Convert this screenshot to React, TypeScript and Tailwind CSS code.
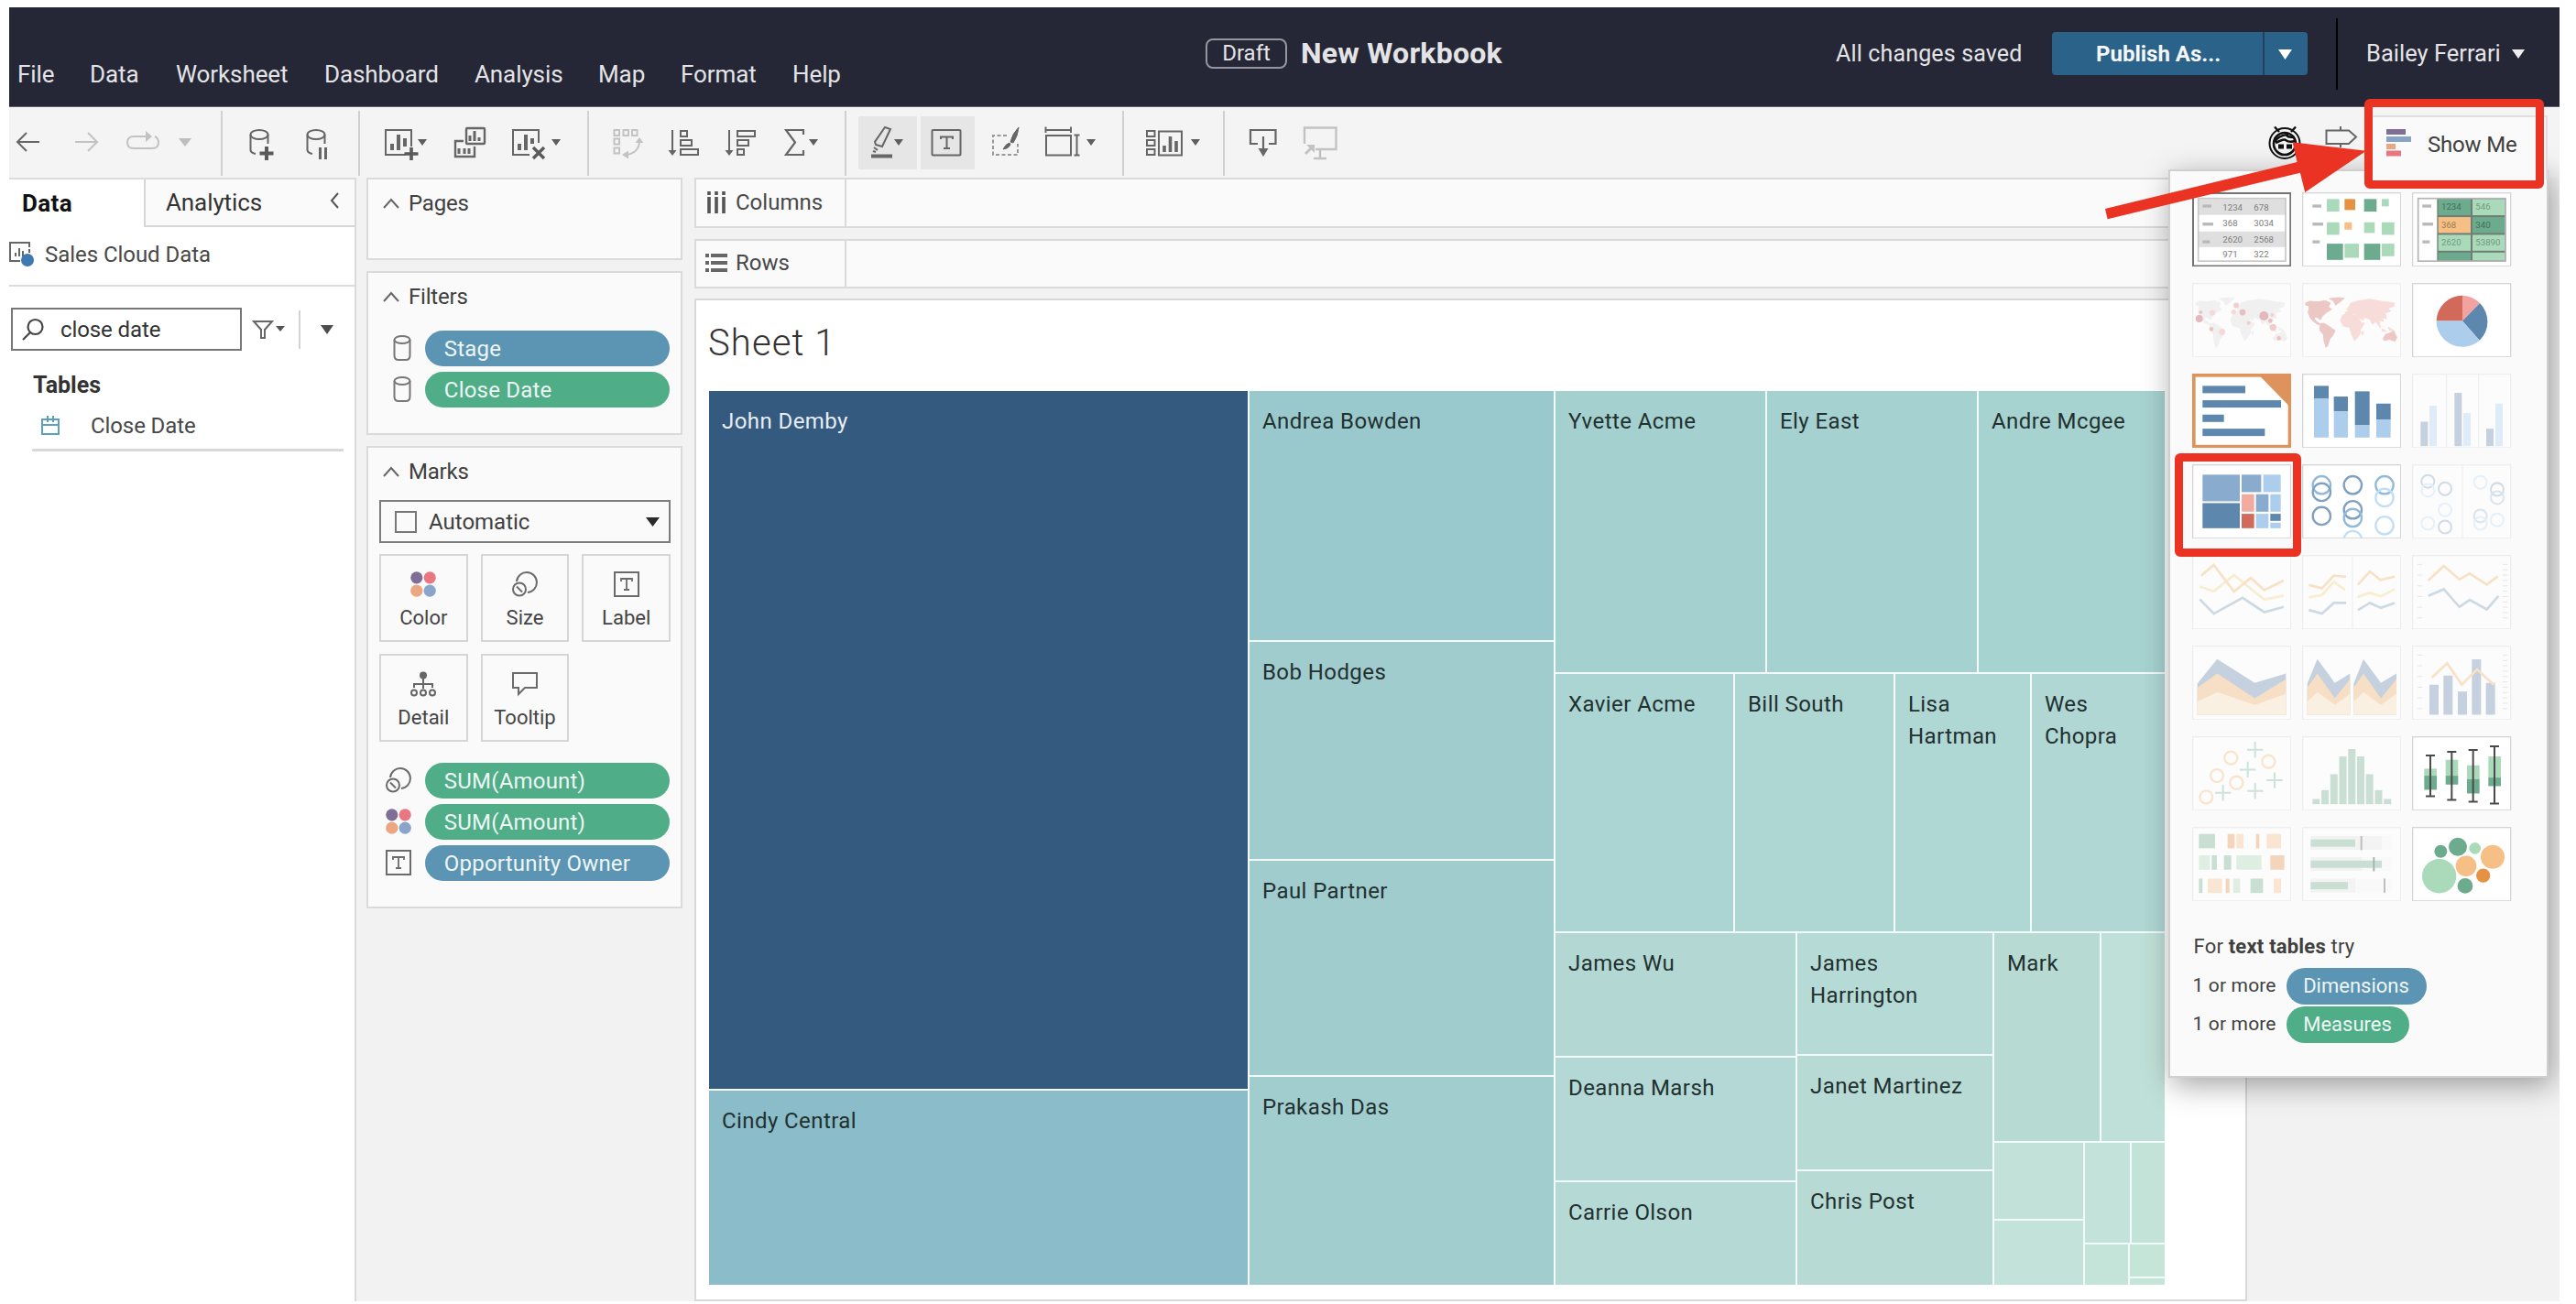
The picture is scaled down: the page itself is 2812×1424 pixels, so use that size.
import React from "react";

type Kids = { children?: React.ReactNode };

/* ---------- toolbar ---------- */

const DARK = "#666666";
const LIGHT = "#c2c2c2";

function Caret({ x, y = 152, w = 10, h = 7, fill = "#5e5e5e" }: { x: number; y?: number; w?: number; h?: number; fill?: string }) {
  return <polygon points={`${x},${y} ${x + w},${y} ${x + w / 2},${y + h}`} fill={fill} stroke="none" />;
}

// A tool's art is drawn in window coordinates; the button spans [from, to].
function Tool({ from, to, color = DARK, children }: Kids & { from: number; to: number; color?: string }) {
  return (
    <svg className="block shrink-0" width={to - from} height={77} viewBox={`${from} 117 ${to - from} 77`} fill="none" stroke={color} strokeWidth={2}>
      {children}
    </svg>
  );
}

function Separator() {
  return <div className="mt-1 h-[71px] w-0.5 shrink-0 bg-[#d0d0d0]" />;
}

function Toolbar() {
  return (
    <div className="flex h-[77px] shrink-0 bg-[#f4f4f4]">
      <Tool from={10} to={60}><path d="M43 155H19M29 145L19 155L29 165" /></Tool>
      <Tool from={60} to={120} color={LIGHT}><path d="M82 155H106M96 145L106 155L96 165" /></Tool>
      <Tool from={120} to={241} color={LIGHT}>
        <path d="M148 149H146Q139 149 139 155.500Q139 162 146 162H166Q173 162 173 155.500Q173 151 169 149M148 149H162" />
        <polygon points="159,143 166,149 159,155" fill={LIGHT} stroke="none" />
        <Caret x={195} y={151} w={14} h={9} fill="#bdbdbd" />
      </Tool>
      <Separator />
      <Tool from={243} to={315}>
        <ellipse cx={283} cy={147} rx={9.500} ry={5} />
        <path d="M273.500 147V164Q274 167 279 168M292.500 147V157" />
        <path d="M291 160V175M283.500 167.500H298.500" strokeWidth={4} stroke="#5a5a5a" />
      </Tool>
      <Tool from={315} to={391}>
        <ellipse cx={345} cy={147} rx={9.500} ry={5} />
        <path d="M335.500 147V164Q336 167 341 168M354.500 147V157" />
        <path d="M349.500 161V174M355.500 161V174" strokeWidth={3} />
      </Tool>
      <Separator />
      <Tool from={393} to={480}>
        <path d="M440 169H421V142H449V160M443 169H440" />
        <path d="M428 164V157M435 164V147M442 160V151" strokeWidth={4} />
        <path d="M449 161V175M441.500 168H456.500" strokeWidth={3.600} stroke="#5a5a5a" />
        <Caret x={456} />
      </Tool>
      <Tool from={480} to={545}>
        <rect x={509} y={140} width={20} height={17} rx={1} strokeWidth={2.400} />
        <path d="M513 154V148M518 154V143M523 154V150" strokeWidth={3} />
        <path d="M506 154H497V171H518V160" strokeWidth={2.400} />
        <path d="M501 168V162M507 168V162M512 168V162" strokeWidth={3} />
      </Tool>
      <Tool from={545} to={641}>
        <path d="M578 169H560V142H588V156" />
        <path d="M567 164V157M574 164V147M581 157V151" strokeWidth={4} />
        <path d="M582 161L594 173M594 161L582 173" strokeWidth={3.400} stroke="#5a5a5a" />
        <Caret x={602} />
      </Tool>
      <Separator />
      <Tool from={643} to={715} color={LIGHT}>
        <rect x={670.500} y={142} width={5.500} height={6} /><rect x={680.500} y={142} width={5.500} height={6} /><rect x={690} y={142} width={5.500} height={6} />
        <rect x={670.500} y={151.500} width={5.500} height={6} /><rect x={670.500} y={161.500} width={5.500} height={6} />
        <path d="M698 155Q697 167 684 169" />
        <polygon points="698,150 702.500,156 693.500,156" fill={LIGHT} stroke="none" />
        <polygon points="679,169 686,164.500 686,173.500" fill={LIGHT} stroke="none" />
      </Tool>
      <Tool from={715} to={778}>
        <path d="M734 142V166" /><polygon points="729.500,164 738.500,164 734,170" fill={DARK} stroke="none" />
        <rect x={743} y={143} width={7} height={6} /><rect x={743} y={153} width={12} height={6} /><rect x={743} y={163} width={19} height={6} />
      </Tool>
      <Tool from={778} to={842}>
        <path d="M796 142V166" /><polygon points="791.500,164 800.500,164 796,170" fill={DARK} stroke="none" />
        <rect x={805} y={143} width={19} height={6} /><rect x={805} y={153} width={12} height={6} /><rect x={805} y={163} width={7} height={6} />
      </Tool>
      <Tool from={842} to={922}>
        <path d="M877 147V142H858L868 155.500L858 169H877V164" strokeWidth={2.200} />
        <Caret x={883} />
      </Tool>
      <Separator />
      <div className="mt-[10px] ml-[13px] h-[58px] w-16 shrink-0 bg-[#e6e6e6]">
        <svg className="block" width={64} height={58} viewBox="937 127 64 58" fill="none" stroke={DARK} strokeWidth={2}>
          <path d="M966 139L972 141L963 160L956 158L955 155Z" />
          <path d="M954 161l4 3M953 165l3 1" />
          <path d="M951 170.500H974" strokeWidth={4} />
          <Caret x={976} />
        </svg>
      </div>
      <div className="mt-[10px] ml-1 h-[58px] w-[59px] shrink-0 bg-[#e6e6e6]">
        <svg className="block" width={59} height={58} viewBox="1005 127 59 58" fill="none" stroke={DARK} strokeWidth={2}>
          <rect x={1017.500} y={142} width={31} height={27.500} rx={1} />
          <path d="M1027 152V149.500H1040V152M1033.500 149.500V162M1030 162H1037" />
        </svg>
      </div>
      <Tool from={1064} to={1127}>
        <path d="M1099 148H1084V169H1111V157" strokeDasharray="4 2.500" stroke="#999" />
        <path d="M1112 139Q1105 146 1103 155L1106 156Q1111 149 1112 139Z" fill={DARK} strokeWidth={1} />
        <path d="M1102 156Q1098 157 1095 163Q1101 162.500 1103 158Z" fill={DARK} strokeWidth={1} />
      </Tool>
      <Tool from={1127} to={1225}>
        <rect x={1142} y={148} width={27} height={21.500} />
        <path d="M1141.500 138.500V145M1169 138.500V145M1141.500 142H1169M1175.500 148V169.500M1172.500 147.500H1178.500M1172.500 169.500H1178.500" />
        <Caret x={1186} />
      </Tool>
      <Separator />
      <Tool from={1227} to={1335}>
        <rect x={1252} y={143} width={8.500} height={6} /><rect x={1252} y={153} width={8.500} height={6} /><rect x={1252} y={163} width={8.500} height={6} />
        <rect x={1265} y={143.500} width={25} height={26} />
        <path d="M1271 166V159M1277.500 166V149M1284 166V154" strokeWidth={3.600} />
        <Caret x={1300} />
      </Tool>
      <Separator />
      <Tool from={1337} to={1408}>
        <path d="M1373 157H1365V142H1392.500V157H1385M1379 149V165" strokeWidth={2.200} />
        <polygon points="1373.500,162 1384.500,162 1379,171" fill={DARK} stroke="none" />
      </Tool>
      <Tool from={1408} to={1475} color={LIGHT}>
        <path d="M1424 157V139.500H1458.500V163H1436M1441 163V173M1434 173H1448" strokeWidth={2.400} />
        <path d="M1425 168L1433 160" strokeWidth={3} /><polygon points="1426,158 1435,158 1435,167" fill={LIGHT} stroke="none" />
      </Tool>
      <div className="grow" />
      <Tool from={2460} to={2525} color="#111111">
        <path d="M2488 144L2483 138.500M2501 144L2506 138.500" strokeWidth={2.400} />
        <circle cx={2494} cy={156.500} r={16.500} strokeWidth={2} /><circle cx={2494} cy={157} r={12} strokeWidth={2.600} />
        <path d="M2483 155Q2487 148 2497 147Q2495 150 2505 150M2484 156Q2494 151 2495 153Q2499 156 2505 154" strokeWidth={2.600} />
        <path d="M2487 157.500h6v5h-6zM2496 157.500h6v5h-6z" fill="#111" stroke="none" />
      </Tool>
      <Tool from={2525} to={2794}>
        <path d="M2539.500 142.500H2564L2572 149.500L2564 157H2539.500ZM2555 138V142M2555 157V161" />
      </Tool>
    </div>
  );
}

/* ---------- header ---------- */

const menu: [string, string][] = [
  ["File", "w-[79px]"], ["Data", "w-[94px]"], ["Worksheet", "w-[162px]"], ["Dashboard", "w-[164px]"],
  ["Analysis", "w-[135px]"], ["Map", "w-[90px]"], ["Format", "w-[122px]"], ["Help", "w-[60px]"],
];

function Header() {
  return (
    <header className="flex h-[109px] shrink-0 border-b border-[#5c5f6e] bg-[#252736] text-[#e4e4e6]">
      <nav className="flex w-[1306px] shrink-0 pt-[57px] pl-[9px] text-[26px] leading-8 tracking-[-0.1px]">
        {menu.map(([label, w]) => <span key={label} className={`${w} shrink-0`}>{label}</span>)}
      </nav>
      <div className="flex h-[100px] w-[688px] shrink-0 items-center">
        <span className="flex h-[33px] w-[89px] items-center justify-center rounded-lg border-2 border-[#96979e] text-2xl">Draft</span>
        <span className="ml-[15px] text-[32px] font-bold tracking-[0.25px]">New Workbook</span>
      </div>
      <div className="flex h-[101px] items-center whitespace-nowrap">
        <span className="w-[236px] text-[25px] tracking-[0.15px]">All changes saved</span>
        <div className="flex h-[47px] w-[279px] overflow-hidden rounded bg-[#2b6289] text-2xl font-bold text-[#f4f6f8]">
          <span className="flex w-[232px] items-center border-r-2 border-[#21425e] pl-12">Publish As...</span>
          <svg className="h-full w-[45px]" viewBox="0 0 45 47"><polygon points="15,19 30,19 22.5,30" fill="#fff" /></svg>
        </div>
        <div className="ml-[31px] h-[78px] w-0.5 bg-black" />
        <span className="ml-[31px] text-[25.500px]">Bailey Ferrari</span>
        <svg className="ml-[12px]" width={14} height={10} viewBox="0 0 14 10"><polygon points="0,0 14,0 7,10" fill="#eee" /></svg>
      </div>
    </header>
  );
}

/* ---------- data pane ---------- */

function DataPane() {
  return (
    <aside className="flex w-[379px] shrink-0 flex-col border-t-2 border-r-2 border-t-[#dcdcdc] border-r-[#dadada] bg-white text-2xl text-[#484848]">
      <div className="flex h-[52px] text-[26px]">
        <div className="flex w-[147px] items-center pl-[14px] font-bold tracking-[0.4px] text-[#111]">Data</div>
        <div className="flex grow items-center justify-between border-b-2 border-l-2 border-[#d6d6d6] bg-[#fafafa] pl-[22px] text-[#333] tracking-[-0.1px]">
          Analytics
          <svg className="mr-4 mb-1" width={11} height={18} viewBox="0 0 11 18" fill="none" stroke="#555" strokeWidth={2}><path d="M9 1L2 9L9 17" /></svg>
        </div>
      </div>
      <div className="flex h-[65px] items-center border-b-2 border-[#dcdcdc] pb-1">
        <svg width={30} height={30} viewBox="0 0 30 30" fill="none" stroke="#666" strokeWidth={2}>
          <path d="M12 22H1V2H22V7M22 9V13M7 17V13M11 17V8M15 17V11" />
          <circle cx={20} cy={21} r={7} fill="#3f79b2" stroke="none" />
        </svg>
        <span className="ml-[9px] tracking-[-0.05px]">Sales Cloud Data</span>
      </div>
      <div className="mt-[23px] ml-0.5 flex h-[47px] items-center">
        <div className="flex h-[47px] w-[252px] items-center border-2 border-[#777] pl-[9px]">
          <svg width={26} height={26} viewBox="0 0 26 26" fill="none" stroke="#444" strokeWidth={2.200}><circle cx={15.500} cy={10} r={8} /><path d="M10 16L2 24" /></svg>
          <span className="ml-[17px] text-[#333] tracking-[-0.1px]">close date</span>
        </div>
        <svg className="ml-[11px]" width={36} height={22} viewBox="0 0 36 22" fill="none" stroke="#666" strokeWidth={2}>
          <path d="M2 2H22L14 11V20H10V11Z" /><polygon points="26,7 36,7 31,13" fill="#555" stroke="none" />
        </svg>
        <div className="ml-[15px] h-[42px] w-0.5 bg-[#d4d4d4]" />
        <svg className="ml-[22px]" width={14} height={10} viewBox="0 0 14 10"><polygon points="0,0 14,0 7,10" fill="#4d4d4d" /></svg>
      </div>
      <div className="mt-5 ml-[26px] text-[25px] leading-9 font-bold text-[#333]">Tables</div>
      <div className="mt-[5px] mr-3 ml-[25px] flex h-[49px] items-center border-b-[3px] border-[#d8d8d8] pb-1 pl-[10px]">
        <svg width={20} height={22} viewBox="0 0 20 22" fill="none" stroke="#5c9fbd" strokeWidth={2}><rect x={1} y={4} width={18} height={16} /><path d="M1 10H19M7 0V7M13 0V7" /></svg>
        <span className="ml-[34px] tracking-[-0.1px]">Close Date</span>
      </div>
    </aside>
  );
}

/* ---------- cards ---------- */

function CardTitle({ children }: Kids) {
  return (
    <div className="flex h-[30px] items-center pl-1 text-2xl tracking-[-0.2px] text-[#404040]">
      <svg width={18} height={12} viewBox="0 0 18 12" fill="none" stroke="#666" strokeWidth={2}><path d="M1 11L9 2L17 11" /></svg>
      <span className="ml-[10px]">{children}</span>
    </div>
  );
}

const Cylinder = () => (
  <svg className="ml-2" width={20} height={28} viewBox="0 0 20 28" fill="none" stroke="#777" strokeWidth={2}>
    <ellipse cx={10} cy={5} rx={8.500} ry={4} /><path d="M1.500 5V22Q1.500 27 6 27H14Q18.500 27 18.500 22V5" />
  </svg>
);
const SizeIcon = () => (
  <svg width={28} height={28} viewBox="0 0 28 28" fill="none" stroke="#6b6b6b" strokeWidth={2}>
    <path d="M5 11A11 11 0 1 1 17 23" /><circle cx={8} cy={19.500} r={7} /><path d="M5 16.500L11 22.500" />
  </svg>
);
const ColorIcon = () => (
  <svg width={28} height={28} viewBox="0 0 28 28">
    <circle cx={6.800} cy={6.800} r={6.600} fill="#7f6f96" /><circle cx={21.200} cy={6.800} r={6.600} fill="#e87782" />
    <circle cx={6.800} cy={21.200} r={6.600} fill="#eaa781" /><circle cx={21.200} cy={21.200} r={6.600} fill="#8aa5c9" />
  </svg>
);
const LabelIcon = () => (
  <svg width={28} height={28} viewBox="0 0 28 28" fill="none" stroke="#6b6b6b" strokeWidth={2}>
    <rect x={1} y={1} width={26} height={26} /><path d="M8 11V8H20V11M14 8V20M11 20H17" strokeWidth={1.800} />
  </svg>
);
const DetailIcon = () => (
  <svg width={28} height={28} viewBox="0 0 28 28" fill="none" stroke="#666" strokeWidth={2}>
    <circle cx={14} cy={4.500} r={4} fill="#666" stroke="none" /><path d="M14 8V19M4 18V14H24V18" />
    <circle cx={4} cy={23.500} r={3} /><circle cx={14} cy={23.500} r={3} /><circle cx={24} cy={23.500} r={3} />
  </svg>
);
const TooltipIcon = () => (
  <svg width={28} height={28} viewBox="0 0 28 28" fill="none" stroke="#6b6b6b" strokeWidth={2}><path d="M1 2H27V18H14L7 25V18H1Z" /></svg>
);

function PillRow({ icon, color, children }: Kids & { icon: React.ReactNode; color: "blue" | "green" }) {
  return (
    <div className="flex h-10 items-center">
      <div className="flex w-[42px] justify-center">{icon}</div>
      <div className={`${color === "blue" ? "bg-[#5c95b3]" : "bg-[#4fae87]"} ml-2 h-[39px] w-[268px] rounded-full pl-[21px] text-2xl leading-[40px] tracking-[0.2px] text-[#eef5f5]`}>
        {children}
      </div>
    </div>
  );
}

function MarkButton({ icon, children }: Kids & { icon: React.ReactNode }) {
  return (
    <div className="flex h-24 flex-col items-center border-2 border-[#d6d6d6] pt-[17px] text-[22px] leading-8 text-[#444]">
      {icon}
      <span className="mt-[7px]">{children}</span>
    </div>
  );
}

function Cards() {
  const card = "border-2 border-[#dadada] bg-[#fafafa] px-3";
  return (
    <div className="ml-[11px] flex w-[345px] shrink-0 flex-col gap-3">
      <section className={`${card} h-[90px] pt-[11px]`}><CardTitle>Pages</CardTitle></section>
      <section className={`${card} h-[179px] pt-[11px]`}>
        <CardTitle>Filters</CardTitle>
        <div className="mt-[21px] flex flex-col gap-[5px]">
          <PillRow icon={<Cylinder />} color="blue">Stage</PillRow>
          <PillRow icon={<Cylinder />} color="green">Close Date</PillRow>
        </div>
      </section>
      <section className={`${card} h-[505px] pt-[11px]`}>
        <CardTitle>Marks</CardTitle>
        <div className="mt-[16px] flex h-[47px] w-[318px] items-center border-2 border-[#7c7c7c] pl-[15px] text-2xl text-[#404040]">
          <div className="h-6 w-6 border-2 border-[#777]" />
          <span className="ml-[13px]">Automatic</span>
          <svg className="mr-[10px] ml-auto" width={15} height={10} viewBox="0 0 15 10"><polygon points="0,0 15,0 7.5,10" fill="#2b2b2b" /></svg>
        </div>
        <div className="mt-3 grid w-[318px] grid-cols-3 gap-x-[14px] gap-y-[13px]">
          <MarkButton icon={<ColorIcon />}>Color</MarkButton>
          <MarkButton icon={<SizeIcon />}>Size</MarkButton>
          <MarkButton icon={<LabelIcon />}>Label</MarkButton>
          <MarkButton icon={<DetailIcon />}>Detail</MarkButton>
          <MarkButton icon={<TooltipIcon />}>Tooltip</MarkButton>
        </div>
        <div className="mt-[22px] flex flex-col gap-[5px]">
          <PillRow icon={<SizeIcon />} color="green">SUM(Amount)</PillRow>
          <PillRow icon={<ColorIcon />} color="green">SUM(Amount)</PillRow>
          <PillRow icon={<LabelIcon />} color="blue">Opportunity Owner</PillRow>
        </div>
      </section>
    </div>
  );
}

/* ---------- sheet ---------- */

function Shelf({ icon, label, h }: { icon: React.ReactNode; label: string; h: string }) {
  return (
    <div className={`${h} flex shrink-0 border-2 border-[#dadada] bg-[#fafafa] text-2xl text-[#484848]`}>
      <div className="flex w-[164px] items-center border-r-2 border-[#dadada] pb-0.5 pl-[10px]">
        {icon}
        <span className="ml-[9px]">{label}</span>
      </div>
    </div>
  );
}

function Cell({ c, children }: Kids & { c: string }) {
  return <div className={`${c} overflow-hidden pt-4 pl-[14px] text-2xl leading-[35px] tracking-[0.42px] text-[#22302f]`}>{children}</div>;
}

function Treemap() {
  return (
    <div className="flex h-[976px] w-[1589px] gap-0.5 bg-[#f3fafa]">
      <div className="flex w-[588px] shrink-0 flex-col gap-0.5">
        <Cell c="h-[762px] bg-[#355a80]"><span className="text-[#e8eef4]">John Demby</span></Cell>
        <Cell c="grow bg-[#8abdc9]">Cindy Central</Cell>
      </div>
      <div className="flex w-[332px] shrink-0 flex-col gap-0.5">
        <Cell c="h-[272px] bg-[#9ac9cd]">Andrea Bowden</Cell>
        <Cell c="h-[237px] bg-[#a0ccce]">Bob Hodges</Cell>
        <Cell c="h-[234px] bg-[#a0ccce]">Paul Partner</Cell>
        <Cell c="grow bg-[#a1cdce]">Prakash Das</Cell>
      </div>
      <div className="flex grow flex-col gap-0.5">
        <div className="flex h-[307px] shrink-0 gap-0.5">
          <Cell c="w-[229px] bg-[#a4d0cf]">Yvette Acme</Cell>
          <Cell c="w-[229px] bg-[#a5d1d0]">Ely East</Cell>
          <Cell c="w-[203px] bg-[#a6d2d0]">Andre Mcgee</Cell>
        </div>
        <div className="flex h-[281px] shrink-0 gap-0.5">
          <Cell c="w-[194px] bg-[#abd5d2]">Xavier Acme</Cell>
          <Cell c="w-[173px] bg-[#aed6d3]">Bill South</Cell>
          <Cell c="w-[147px] bg-[#afd7d4]">Lisa Hartman</Cell>
          <Cell c="w-[145px] bg-[#b0d7d4]">Wes<br />Chopra</Cell>
        </div>
        <div className="flex grow gap-0.5">
          <div className="flex w-[262px] flex-col gap-0.5">
            <Cell c="h-[134px] bg-[#b3d8d4]">James Wu</Cell>
            <Cell c="h-[134px] bg-[#b3d8d5]">Deanna Marsh</Cell>
            <Cell c="grow bg-[#b5dad6]">Carrie Olson</Cell>
          </div>
          <div className="flex w-[213px] flex-col gap-0.5">
            <Cell c="h-[132px] bg-[#b6dad6]">James<br />Harrington</Cell>
            <Cell c="h-[124px] bg-[#b7dad4]">Janet Martinez</Cell>
            <Cell c="grow bg-[#b7dad4]">Chris Post</Cell>
          </div>
          <div className="flex w-[186px] flex-col gap-0.5">
            <div className="flex h-[227px] shrink-0 gap-0.5">
              <Cell c="w-[115px] bg-[#b7dad3]">Mark</Cell>
              <div className="grow bg-[#bfe0d8]" />
            </div>
            <div className="flex grow gap-0.5">
              <div className="flex w-[97px] flex-col gap-0.5">
                <div className="h-[83px] bg-[#c1e1d9]" />
                <div className="grow bg-[#c3e2d9]" />
              </div>
              <div className="flex w-[87px] flex-col gap-0.5">
                <div className="flex h-[109px] gap-0.5"><div className="w-[49px] bg-[#c3e2d9]" /><div className="grow bg-[#c3e3d9]" /></div>
                <div className="flex grow gap-0.5">
                  <div className="w-[47px] bg-[#c4e3d9]" />
                  <div className="flex grow flex-col gap-0.5"><div className="h-[35px] bg-[#c5e5d9]" /><div className="grow bg-[#c5e5d9]" /></div>
                </div>
              </div>
            </div>
          </div>
        </div>
      </div>
    </div>
  );
}

function Sheet() {
  return (
    <main className="ml-[13px] flex w-[1695px] shrink-0 flex-col">
      <Shelf h="h-[55px]" label="Columns" icon={
        <svg width={24} height={24} viewBox="0 0 24 24" stroke="#555" strokeWidth={3.600}><path d="M4 0V4M12 0V4M20 0V4M4 6V24M12 6V24M20 6V24" /></svg>} />
      <div className="h-3" />
      <Shelf h="h-[54px]" label="Rows" icon={
        <svg width={24} height={20} viewBox="0 0 24 20" stroke="#666" strokeWidth={4}><path d="M0 2H4M0 10H4M0 18H4M6 2H24M6 10H24M6 18H24" /></svg>} />
      <div className="mt-[11px] h-[1095px] border-2 border-[#d8d8d8] bg-white pl-[14px]">
        <h1 className="mt-[21px] -ml-px h-[78px] text-[40px] leading-[52px] font-light tracking-[1.1px] text-[#333]">Sheet 1</h1>
        <Treemap />
      </div>
    </main>
  );
}

/* ---------- Show Me thumbnails: every drawing uses a 325 x 244 canvas ---------- */

type R = [number, number, number, number, string];
const Rects = ({ d }: { d: R[] }) => <>{d.map(([x, y, w, h, f], i) => <rect key={i} x={x} y={y} width={w} height={h} fill={f} />)}</>;
type C = [number, number, number, string];
const Rings = ({ d, w }: { d: C[]; w: number }) => <>{d.map(([x, y, r, s], i) => <circle key={i} cx={x} cy={y} r={r} stroke={s} strokeWidth={w} fill="none" />)}</>;
const Discs = ({ d }: { d: C[] }) => <>{d.map(([x, y, r, f], i) => <circle key={i} cx={x} cy={y} r={r} fill={f} />)}</>;
const Lines = ({ d }: { d: [string, string][] }) => <>{d.map(([p, s], i) => <polyline key={i} points={p} stroke={s} strokeWidth={8} fill="none" />)}</>;

const G1 = "#abdabb", G2 = "#6cab8d", O1 = "#f6bf85", O2 = "#e69243";
const B1 = "#adcdec", B2 = "#88abce", B3 = "#5d87ad";
const fo = "#f8e1c5", fy = "#f8edcf", fb = "#cdd9e4";
const pg = "#cadfd4", plg = "#dfeee3", po = "#f3d5bb", plo = "#f9e5d1";

function Thumb({ on, border, bw = 4, children }: Kids & { on?: boolean; border?: string; bw?: number }) {
  return (
    <svg className="block h-[81.500px] w-full" viewBox="0 0 325 244" preserveAspectRatio="none">
      <rect width={325} height={244} fill={on ? "#ffffff" : "#fcfcfc"} />
      {children}
      <rect x={bw / 2} y={bw / 2} width={325 - bw} height={244 - bw} fill="none" stroke={border ?? (on ? "#d6d6d6" : "#eeeeee")} strokeWidth={bw} />
    </svg>
  );
}

function Num({ x, y, f = "#7d7d7d", children }: Kids & { x: number; y: number; f?: string }) {
  return <text x={x} y={y} fill={f} fontSize={29} fontFamily="Roboto" fontWeight={400}>{children}</text>;
}

const dashes: R[] = [[34, 40, 29, 10, "#b9b9b9"], [34, 99, 35, 10, "#b9b9b9"], [34, 157, 24, 10, "#b9b9b9"]];

const americas = [
  "12,66 25,60 50,62 75,58 92,66 86,78 96,86 80,96 66,108 60,120 50,112 38,112 44,124 58,134 52,136 38,126 26,112 20,96 24,76 12,72",
  "90,52 120,48 138,50 126,60 110,72 102,58", "58,134 72,132 88,142 108,156 100,172 90,184 84,204 78,210 72,190 70,168 58,154",
  "266,182 274,168 288,164 300,158 310,178 304,190 286,184 270,188",
];
const eurasia = [
  "148,86 160,66 180,60 220,53 260,60 302,66 300,76 280,84 290,92 272,98 276,116 262,112 266,124 252,122 256,146 242,126 230,134 222,118 204,112 198,122 184,108 170,100 150,104 140,98 152,92",
  "134,104 152,100 182,108 194,130 204,132 192,150 188,170 172,188 162,166 156,146 134,140 126,122", "262,150 276,158 262,158", "194,162 200,158 198,170", "282,144 304,158 286,154",
];
const Land = ({ d, f }: { d: string[]; f: string }) => <>{d.map((p) => <polygon key={p} points={p} fill={f} stroke={f} strokeWidth={3} strokeLinejoin="round" />)}</>;

function Ticks() {
  return (
    <g stroke="#e6e6e6" strokeWidth={3}>
      {[0, 1, 2, 3, 4, 5].map((i) => <path key={i} d={`M18 ${31 + i * 35}H34`} />)}
      {[0, 1, 2, 3, 4, 5, 6, 7, 8, 9, 10].map((i) => <path key={i} d={`M297 ${31 + i * 17.500}H313`} />)}
    </g>
  );
}

function Area({ x, peak, dip, end }: { x: number; peak: number; dip: number; end: number }) {
  const band = (a: number, b: number, c: number, d: number) => `${x},${a} ${peak},${b} ${dip},${c} ${end},${d} ${end},226 ${x},226`;
  return (
    <>
      <polygon points={band(124, 44, 122, 91)} fill="#c5d1de" />
      <polygon points={band(138, 91, 172, 110)} fill="#f6dfc4" />
      <polygon points={band(183, 152, 194, 158)} fill="#f9f0e2" />
    </>
  );
}

const boxes = [[60, 63, 196, 106, 129, 175], [130, 51, 208, 77, 129, 158], [200, 45, 214, 95, 140, 187], [270, 33, 220, 66, 135, 163]];

function Gallery() {
  return (
    <div className="grid w-[349px] grid-cols-3 gap-x-3 gap-y-[17.500px]">
      <Thumb on border="#737373" bw={6}>
        <Rects d={[[18, 22, 289, 52, "#dfdfdf"], [18, 128, 289, 51, "#dfdfdf"], ...dashes]} />
        <rect x={20} y={20} width={286} height={205} fill="none" stroke="#c8c8c8" strokeWidth={5} />
        <Num x={100} y={60}>1234</Num><Num x={202} y={60}>678</Num><Num x={100} y={112}>368</Num><Num x={202} y={112}>3034</Num>
        <Num x={100} y={165}>2620</Num><Num x={202} y={165}>2568</Num><Num x={100} y={212}>971</Num><Num x={202} y={212}>322</Num>
      </Thumb>
      <Thumb on>
        <Rects d={[...dashes, [81, 22, 41, 41, G1], [139, 22, 35, 36, O2], [203, 22, 41, 41, G2], [261, 22, 23, 24, G1],
          [81, 98, 41, 41, G1], [139, 98, 24, 24, O1], [203, 98, 35, 35, G1], [261, 98, 41, 41, G1],
          [81, 168, 53, 53, G2], [139, 168, 47, 46, G1], [203, 168, 53, 53, G2], [261, 168, 41, 41, G1]]} />
      </Thumb>
      <Thumb on>
        <Rects d={[...dashes, [82, 20, 225, 205, "#6f7d75"], [86, 22, 106, 53, G2], [198, 22, 107, 53, G1], [86, 81, 106, 52, O1], [198, 81, 107, 52, G2],
          [86, 139, 106, 52, G1], [198, 139, 107, 52, G1], [86, 197, 106, 26, G2], [198, 197, 107, 26, G1]]} />
        <rect x={20} y={20} width={286} height={205} fill="none" stroke="#b4b4b4" strokeWidth={5} />
        <Num x={96} y={57} f="#42705a">1234</Num><Num x={208} y={57} f="#6f9a7e">546</Num><Num x={96} y={117} f="#a37a50">368</Num><Num x={208} y={117} f="#42705a">340</Num>
        <Num x={96} y={175} f="#6f9a7e">2620</Num><Num x={208} y={175} f="#6f9a7e">53890</Num>
      </Thumb>

      <Thumb>
        <Land d={americas} f="#f0f0f0" /><Land d={eurasia} f="#f0f0f0" />
        <Discs d={[[23, 117, 12, "#e3b9bd"], [28, 96, 6, "#e8c3c3"], [66, 97, 9, "#f6d8d6"], [144, 73, 9, "#f2cfcb"], [136, 95, 8, "#f6d8d6"], [165, 96, 10, "#e8bfc2"], [235, 108, 15, "#e3b9bd"],
          [262, 105, 6, "#f2cfcb"], [256, 124, 7, "#e8bfc2"], [265, 145, 11, "#f0cdca"], [185, 131, 6, "#f2cfcb"], [63, 151, 7, "#eac4c4"], [98, 160, 10, "#f6d8d6"], [284, 181, 7, "#eac4c4"]]} />
      </Thumb>
      <Thumb><Land d={americas} f="#ecc8c5" /><Land d={eurasia} f="#f8dcda" /></Thumb>
      <Thumb on>
        <path d="M165 124L80 124A85 85 0 0 1 165 41Z" fill="#d26a5c" /><path d="M165 124V41A85 85 0 0 1 222 66Z" fill="#f3a39f" />
        <path d="M165 124L222 66A85 85 0 0 1 221 188Z" fill={B3} /><path d="M165 124L221 188A85 85 0 0 1 80 124Z" fill={B1} />
      </Thumb>

      <Thumb on border="#de935d" bw={11}>
        <polygon points="222,8 318,8 318,106" fill="#de935d" />
        <Rects d={[[34, 40, 140, 24, B3], [34, 87, 257, 24, B3], [34, 134, 70, 24, B3], [34, 180, 204, 24, B3]]} />
      </Thumb>
      <Thumb on>
        <Rects d={[[39, 40, 48, 42, B3], [39, 82, 48, 127, B1], [104, 75, 46, 48, B3], [104, 123, 46, 86, B1], [173, 58, 48, 111, B3], [173, 169, 48, 40, B1], [243, 98, 47, 53, B3], [243, 151, 47, 58, B1]]} />
      </Thumb>
      <Thumb>
        <Rects d={[[111, 0, 4, 244, "#f0f0f0"], [216, 0, 4, 244, "#f0f0f0"], [28, 157, 24, 80, "#c5d1de"], [57, 105, 24, 132, "#deebf8"], [139, 63, 24, 174, "#c5d1de"], [168, 129, 24, 108, "#deebf8"], [243, 180, 24, 57, "#c5d1de"], [273, 98, 24, 139, "#deebf8"]]} />
      </Thumb>

      <Thumb on>
        <Rects d={[[34, 34, 122, 87, B2], [34, 127, 122, 82, B3], [162, 34, 64, 57, B2], [233, 34, 57, 57, B1], [162, 98, 41, 57, "#f3aba0"], [209, 98, 41, 57, B2], [256, 98, 34, 57, B1],
          [162, 162, 41, 47, "#d26a5c"], [209, 162, 41, 47, B1], [256, 162, 34, 23, B3], [256, 191, 34, 18, B1]]} />
      </Thumb>
      <Thumb on>
        <Rings w={7} d={[[64, 68, 29, "#93b9d8"], [64, 91, 29, "#7fa0bf"], [64, 169, 29, "#7fa0bf"], [166, 68, 29, "#7fa0bf"], [166, 149, 29, "#7fa0bf"], [166, 175, 29, "#93b9d8"], [166, 247, 29, "#c2def4"],
          [270, 68, 29, "#93b9d8"], [270, 109, 29, "#c2def4"], [270, 200, 29, "#c2def4"]]} />
      </Thumb>
      <Thumb>
        <Rects d={[[163, 0, 4, 244, "#f0f0f0"]]} />
        <Rings w={6} d={[[52, 56, 21, "#d0dbe5"], [52, 85, 21, "#e6f0f9"], [108, 80, 21, "#d0dbe5"], [108, 149, 21, "#e6f0f9"], [52, 193, 21, "#e6f0f9"], [108, 205, 21, "#d0dbe5"],
          [224, 59, 21, "#e6f0f9"], [279, 82, 21, "#d0dbe5"], [279, 109, 21, "#d8e4ee"], [224, 169, 21, "#d8e4ee"], [224, 193, 21, "#e6f0f9"], [279, 182, 21, "#e6f0f9"]]} />
      </Thumb>

      <Thumb><Lines d={[["25,103 71,119 137,66 236,146 300,133", fy], ["30,67 71,33 137,120 192,75 236,115 300,84", fo], ["25,145 71,192 165,140 236,187 300,170", fb]]} /></Thumb>
      <Thumb>
        <Rects d={[[163, 0, 4, 244, "#f0f0f0"]]} />
        <Lines d={[["22,98 65,109 104,68 144,71", fo], ["22,139 65,131 104,88 141,114", fy], ["22,180 65,192 104,157 144,157", fb],
          ["183,97 222,54 256,82 303,71", fo], ["180,138 222,124 258,135 303,112", fy], ["183,180 222,157 258,173 303,157", fb]]} />
      </Thumb>
      <Thumb><Ticks /><Lines d={[["53,84 104,36 155,80 189,61 245,97 281,70", fo], ["53,134 104,112 155,170 189,147 245,178 283,134", fb]]} /></Thumb>

      <Thumb><Area x={17} peak={82} dip={205} end={307} /></Thumb>
      <Thumb><Area x={17} peak={50} dip={107} end={157} /><Area x={169} peak={201} dip={258} end={309} /></Thumb>
      <Thumb>
        <Ticks />
        <Rects d={[[57, 128, 30, 98, "#c5d1de"], [103, 98, 30, 128, "#c5d1de"], [150, 150, 30, 76, "#c5d1de"], [196, 45, 30, 181, "#c5d1de"], [242, 122, 30, 104, "#c5d1de"]]} />
        <Lines d={[["65,105 115,58 163,128 213,78 268,128", fo]]} />
      </Thumb>

      <Thumb>
        <Rings w={7} d={[[127, 71, 21, "#f9e5cd"], [250, 83, 21, "#f9e5cd"], [81, 129, 21, "#f9e5cd"], [145, 152, 21, "#f9e5cd"], [46, 199, 21, "#f9e5cd"]]} />
        {[[206, 44], [182, 109], [270, 144], [206, 179], [101, 185]].map(([x, y]) => <path key={`${x}-${y}`} d={`M${x - 26} ${y}h52M${x} ${y - 26}v52`} stroke="#cde2d8" strokeWidth={6} />)}
      </Thumb>
      <Thumb><Rects d={[205, 176, 124, 66, 42, 66, 124, 176, 205].map((t, i): R => [34 + i * 29.200, t, 24, 222 - t, pg])} /></Thumb>
      <Thumb on>
        {boxes.map(([x, t, b, l, m, e]) => (
          <g key={x}>
            <rect x={x - 20} y={l} width={41} height={m - l} fill={G1} /><rect x={x - 20} y={m} width={41} height={e - m} fill={G2} />
            <path d={`M${x} ${t}V${b}M${x - 15} ${t}h30M${x - 15} ${b}h30`} stroke="#4a4a4a" strokeWidth={6} />
          </g>
        ))}
      </Thumb>

      <Thumb>
        <Rects d={[[22, 23, 53, 47, pg], [116, 23, 23, 47, po], [145, 23, 23, 47, plo], [209, 23, 11, 47, po], [244, 23, 47, 47, plo],
          [22, 93, 36, 47, plg], [64, 93, 17, 47, pg], [104, 93, 24, 47, pg], [145, 93, 82, 47, plg], [256, 93, 46, 47, po],
          [22, 169, 12, 47, pg], [51, 169, 47, 47, plo], [110, 169, 12, 47, po], [134, 169, 23, 47, plg], [191, 169, 41, 47, pg], [267, 169, 24, 47, plo]]} />
      </Thumb>
      <Thumb>
        <Rects d={[[28, 30, 267, 45, "#f9f9f9"], [28, 30, 233, 45, "#f3f3f3"], [28, 41, 146, 24, pg], [191, 30, 6, 46, "#bdbdbd"],
          [28, 99, 267, 45, "#f9f9f9"], [28, 99, 167, 45, "#f3f3f3"], [28, 110, 233, 24, pg], [232, 99, 6, 46, "#a9b5ae"],
          [28, 169, 267, 45, "#f9f9f9"], [28, 169, 146, 45, "#f3f3f3"], [28, 180, 122, 24, pg], [267, 169, 6, 46, "#bdbdbd"]]} />
      </Thumb>
      <Thumb on>
        <Discs d={[[94, 80, 21, G2], [150, 65, 30, G2], [206, 70, 19, G1], [264, 98, 39, O1], [177, 128, 34, O1], [233, 159, 23, O2], [89, 161, 56, G1], [174, 193, 25, G2]]} />
      </Thumb>
    </div>
  );
}

function ShowMe() {
  return (
    <>
      {/* drop-down panel */}
      <div className="absolute top-[177px] left-[2357px] h-[992px] w-[415px] border-2 border-[#cfcfcf] bg-[#fafafa] pt-[22.500px] pl-[23.500px] text-[22px] text-[#404040] shadow-[4px_8px_30px_rgba(0,0,0,0.36)]">
        <Gallery />
        <div className="mt-[34px] ml-0.5 leading-8 tracking-[0.2px]">For <b>text tables</b> try</div>
        <div className="mt-[7px] ml-px flex h-10 items-center">
          <span className="w-[102px] text-[21px] tracking-[0.15px]">1 or more</span>
          <span className="h-10 w-[153px] rounded-full bg-[#5c95b3] text-center leading-10 text-[#eef5f5]">Dimensions</span>
        </div>
        <div className="mt-0.5 ml-px flex h-10 items-center">
          <span className="w-[102px] text-[21px] tracking-[0.15px]">1 or more</span>
          <span className="h-10 w-[134px] rounded-full bg-[#4fae87] text-center leading-10 text-[#eef5f5]">Measures</span>
        </div>
      </div>
      {/* button that opens the panel */}
      <div className="absolute top-[118px] left-[2572px] flex h-[70px] w-[199px] border-t-2 border-r-2 border-[#e0e0e0] bg-[#fafafa] pt-[12px] pl-[23px] text-2xl leading-[36px] text-[#404040]">
        <svg width={28} height={32} viewBox="0 0 28 32">
          <rect y={1} width={21} height={6} fill="#7f6f96" /><rect y={9} width={27} height={6} fill="#87a4c7" /><rect y={17} width={10} height={6} fill="#eaa781" /><rect y={24.500} width={16} height={6} fill="#e87580" />
        </svg>
        <span className="ml-[17px] tracking-[-0.2px]">Show Me</span>
      </div>
    </>
  );
}

function Annotations() {
  return (
    <>
      <svg className="absolute top-[130px] left-[2280px]" width={300} height={110} viewBox="2290 138 300 110">
        <polygon fill="#ea3323" points="2298,228 2507.600,177 2502.600,155.300 2583,164.700 2516.200,210 2510.900,188.700 2300.600,239.300" />
      </svg>
      <div className="absolute top-[99.500px] left-[2571px] h-[98px] w-[196px] rounded-md border-[9px] border-[#ea3323]" />
      <div className="absolute top-[487px] left-[2364px] h-[113px] w-[138px] rounded-md border-[9px] border-[#ea3323]" />
    </>
  );
}

export default function App() {
  return (
    <div className="h-[1424px] w-[2812px] overflow-hidden bg-white pt-2 font-['Roboto',sans-serif]">
      <div className="relative ml-[10px] flex h-[1413px] w-[2784px] flex-col overflow-hidden bg-[#f2f2f2]">
        <Header />
        <Toolbar />
        <div className="flex grow">
          <DataPane />
          <Cards />
          <Sheet />
        </div>
        <ShowMe />
        <Annotations />
      </div>
    </div>
  );
}
